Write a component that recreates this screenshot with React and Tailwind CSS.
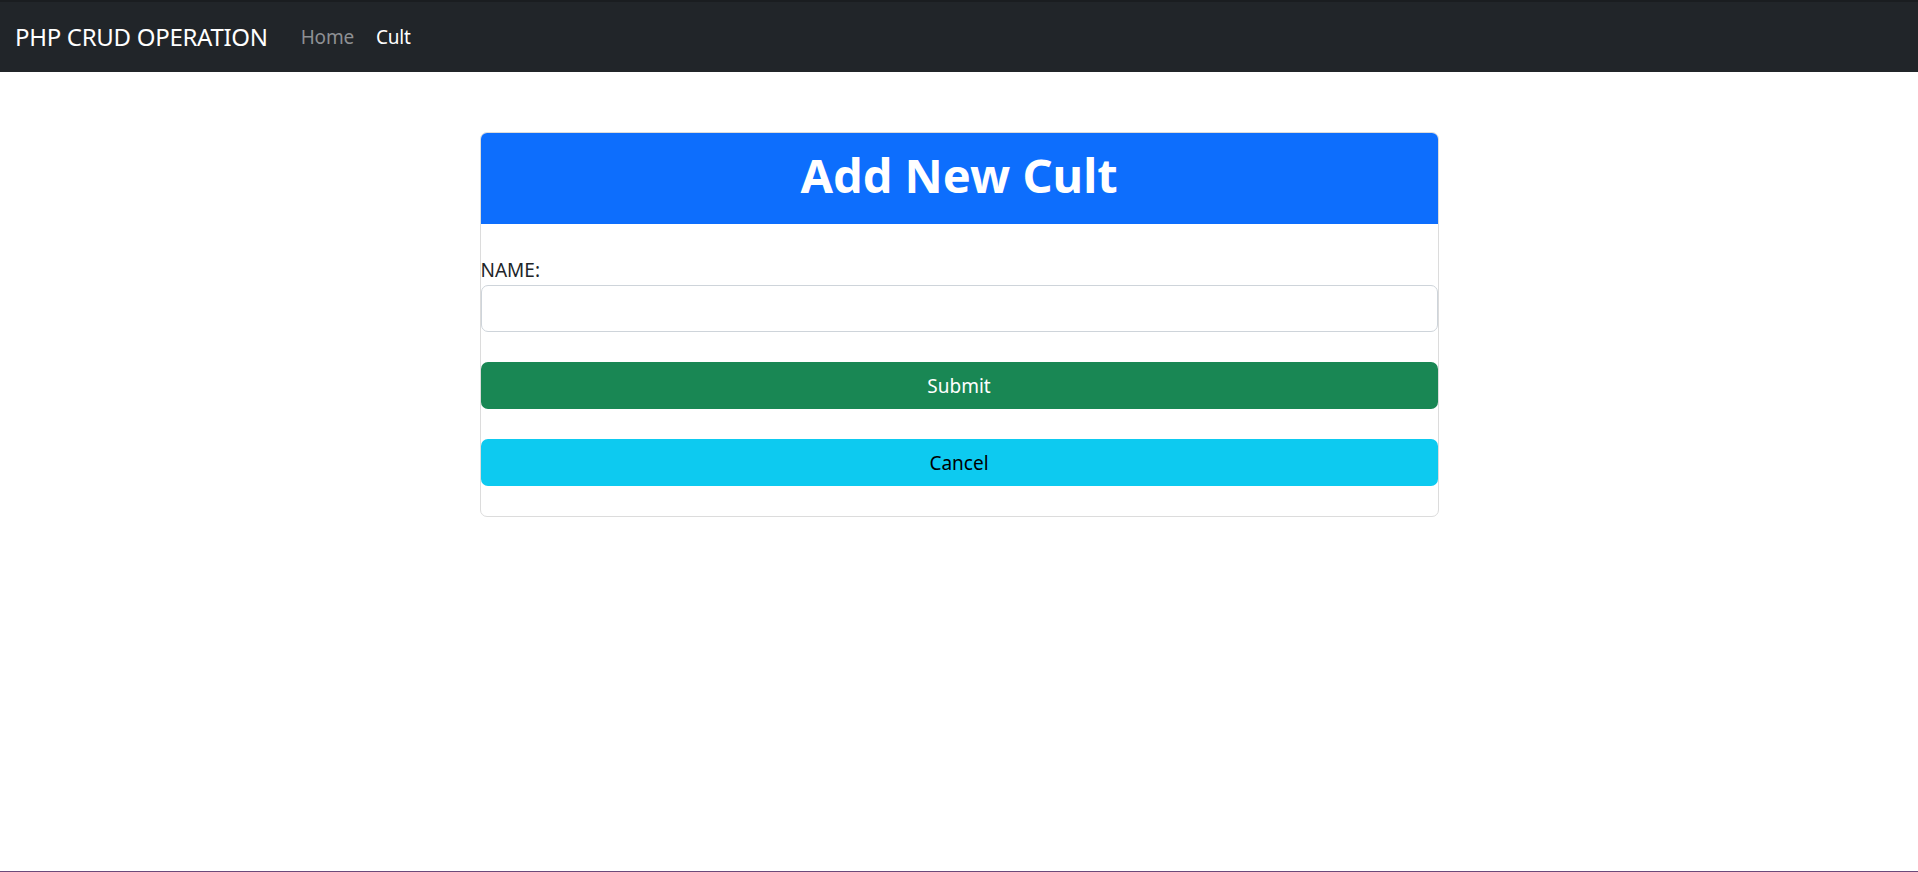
import React from 'react';

export default function App() {
  return (
    <div className="h-[872px] bg-white border-b border-[#6b4a7a] font-['Noto_Sans',sans-serif]">
      {/* Navbar */}
      <nav className="h-[72px] bg-[#212529] border-t-2 border-[#1a1d20] flex items-center px-[15px]">
        <span className="text-white text-[24px] leading-none tracking-[-0.3px]">PHP CRUD OPERATION</span>
        <div className="flex items-center ml-[33px] gap-[22px] text-[19px] tracking-[-0.2px]">
          <a className="text-[#8e9093]">Home</a>
          <a className="text-white">Cult</a>
        </div>
      </nav>

      {/* Card */}
      <div className="w-[959px] mx-auto mt-[60px] border border-[#dcdcdc] rounded-[7px] overflow-hidden">
        <div className="bg-[#0d6efd] h-[91px] flex items-center justify-center pb-[6px]">
          <h1 className="text-white font-bold text-[47px] leading-none">Add New Cult</h1>
        </div>
        <form className="pt-[31px] pb-[30px] flex flex-col">
          <label className="text-[19px] leading-[30px] text-[#212529]">NAME:</label>
          <input className="h-[47px] w-full border border-[#ced4da] rounded-[7px] px-3 text-[19px] outline-none" />
          <button type="button" className="mt-[30px] h-[47px] w-full rounded-[7px] bg-[#198754] text-white text-[19px] pt-[2px]">
            Submit
          </button>
          <button type="button" className="mt-[30px] h-[47px] w-full rounded-[7px] bg-[#0dcaf0] text-black text-[19px] pt-[2px]">
            Cancel
          </button>
        </form>
      </div>
    </div>
  );
}
